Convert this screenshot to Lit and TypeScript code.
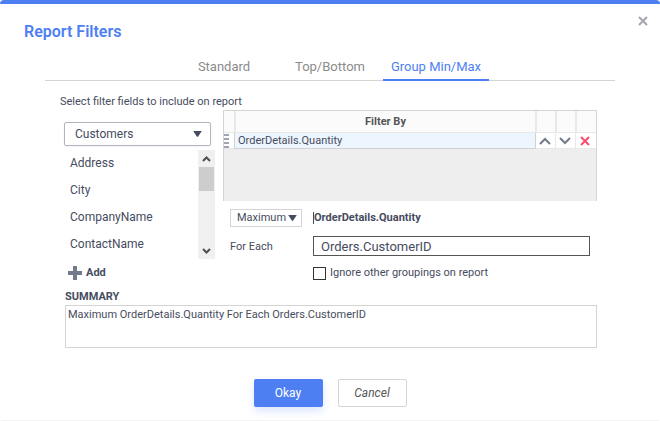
import { LitElement, html, css, svg } from "lit";
import { customElement, state } from "lit/decorators.js";
import { classMap } from "lit/directives/class-map.js";

const caret = html`<svg class="caret" width="9" height="6" viewBox="0 0 9 6" aria-hidden="true">
  <path d="M0.2 0H8.8L5.2 5.4Q4.5 6.2 3.8 5.4Z" fill="#464c60" />
</svg>`;

const strokeIcon = (w: number, h: number, d: string, color: string, width: number) => html`<svg
  width=${w} height=${h} viewBox="0 0 ${w} ${h}" fill="none" aria-hidden="true">
  ${svg`<path d=${d} stroke=${color} stroke-width=${width} />`}
</svg>`;

@customElement("app-root")
export class AppRoot extends LitElement {
  @state() private tab = "Group Min/Max";

  private tabs = ["Standard", "Top/Bottom", "Group Min/Max"];
  private fields = ["Address", "City", "CompanyName", "ContactName"];

  static styles = css`
    :host {
      display: block;
      font-family: Roboto, "Liberation Sans", sans-serif;
      font-size: 11px;
      line-height: 14px;
      color: #464c60;
    }
    * {
      box-sizing: border-box;
    }
    button, input, select, textarea {
      font: inherit;
      color: inherit;
      margin: 0;
      padding: 0;
      border: 0;
      border-radius: 0;
      background: none;
      outline: none;
    }
    svg {
      display: block;
    }
    .dialog {
      background: #fff;
      border-top: 4px solid #4d7ff3;
      border-bottom: 1px solid #f4f4f4;
      border-radius: 4px 4px 2px 2px;
      padding-bottom: 13px;
    }
    .head {
      display: flex;
      justify-content: space-between;
      align-items: flex-start;
      padding: 12px 12px 0 24px;
      height: 48px;
    }
    h1 {
      margin: 6px 0 0;
      font-size: 16px;
      line-height: 20px;
      font-weight: 600;
      color: #4d7ff3;
    }
    .tabs {
      display: flex;
      justify-content: center;
      margin: 0 45px;
      height: 29px;
      border-bottom: 1px solid #d4d4d4;
    }
    .tab {
      width: 106px;
      height: 29px;
      padding-top: 2px;
      font-size: 13px;
      color: #8b8b8b;
      border-bottom: 2px solid transparent;
    }
    .tab.active {
      color: #4d7ff3;
      border-color: #4d7ff3;
    }
    .body {
      padding: 14px 63px 0 60px;
    }
    .hint {
      margin: 0 0 1px;
    }
    .columns {
      display: grid;
      grid-template-columns: 163px minmax(0, 1fr);
    }
    .left {
      padding: 12px 8px 0 4px;
    }
    .pick {
      display: grid;
      align-items: center;
    }
    .pick select, .caret {
      grid-area: 1 / 1;
    }
    .pick select {
      appearance: none;
      width: 100%;
    }
    .caret {
      justify-self: end;
      pointer-events: none;
    }
    .table-pick {
      margin-right: 4px;
    }
    .table-pick select {
      height: 24px;
      padding: 0 10px;
      font-size: 12px;
      border: 1px solid #b1b5c0;
      border-radius: 2px;
      box-shadow: 0 1px 3px #0000000d;
    }
    .table-pick .caret {
      margin-right: 9px;
    }
    .list {
      display: flex;
      height: 109px;
      margin-top: 4px;
    }
    .list ul {
      flex: 1;
      list-style: none;
      margin: 0;
      padding: 0;
      overflow: hidden;
    }
    .list li button {
      display: block;
      width: 100%;
      height: 27px;
      padding: 0 6px 2px;
      font-size: 12px;
      text-align: left;
    }
    .bar {
      display: flex;
      flex-direction: column;
      width: 17px;
      background: #f0f0f0;
    }
    .bar button {
      display: grid;
      place-items: center;
      height: 17px;
    }
    .track {
      flex: 1;
      padding: 0 1px;
    }
    .thumb {
      height: 24px;
      background: #cdcdcd;
    }
    .add {
      display: flex;
      align-items: center;
      gap: 4px;
      height: 14px;
      margin: 7px 0 0 4px;
      font-weight: 700;
    }
    .grid {
      height: 91px;
      background: #eee;
      border: 1px solid #d4d4d4;
      border-bottom: 0;
    }
    table {
      width: 100%;
      table-layout: fixed;
      border-collapse: separate;
      border-spacing: 0;
    }
    .drag-col {
      width: 10px;
    }
    .icon-col {
      width: 20px;
    }
    .last-col {
      width: 21px;
    }
    th, td {
      padding: 0;
    }
    th {
      height: 22px;
      background: #fbfbfb;
      border-left: 2px solid #e8e8e8;
      border-bottom: 1px solid #e8e8e8;
      font-weight: 700;
      color: #555;
    }
    th:first-child {
      border-left: 0;
    }
    td {
      height: 16px;
      background: #fff;
      border-bottom: 1px solid #e8e8e8;
      border-left: 1px solid #e8e8e8;
    }
    td.name {
      padding-left: 3px;
      background: #edf5fe;
      border-color: #d0d2d6;
    }
    td.name + td {
      border-left-color: #d0d2d6;
    }
    td.drag {
      border-left: 0;
    }
    td button {
      display: grid;
      place-items: center;
      width: 18px;
      height: 15px;
    }
    .rule {
      display: grid;
      grid-template-columns: 72px minmax(0, 1fr);
      column-gap: 11px;
      align-items: center;
      padding: 8px 7px 0;
    }
    .agg select {
      height: 18px;
      padding: 0 6px;
      border: 1px solid #d4d4d4;
    }
    .agg .caret {
      margin-right: 5px;
    }
    .field {
      font-weight: 700;
      border-left: 1px solid #464c60;
      line-height: 12px;
    }
    .each {
      height: 20px;
      width: 100%;
      margin: 9px 0 10px;
      padding: 0 7px;
      border: 1px solid #555;
      font-size: 13px;
    }
    .ignore {
      grid-column: 2;
      display: flex;
      align-items: center;
      gap: 4px;
    }
    .ignore input {
      appearance: none;
      width: 13px;
      height: 13px;
      border: 1px solid #333;
    }
    .ignore input:checked {
      background: #464c60;
    }
    .summary {
      display: flex;
      flex-direction: column;
      gap: 1px;
      margin: 10px 0 0 5px;
    }
    .summary label {
      font-weight: 700;
    }
    textarea {
      display: block;
      height: 43px;
      padding: 2px;
      border: 1px solid #d4d4d4;
      resize: none;
    }
    .actions {
      display: flex;
      justify-content: center;
      gap: 15px;
      margin-top: 31px;
    }
    .action {
      width: 69px;
      height: 28px;
      border-radius: 2px;
      font-size: 12px;
    }
    .primary {
      background: #4d7ff3;
      color: #fff;
      box-shadow: 0 4px 8px #4d7ff333;
    }
    .secondary {
      border: 1px solid #d4d4d4;
      font-style: italic;
      color: #555;
    }
  `;

  render() {
    return html`
      <form class="dialog" @submit=${(e: Event) => e.preventDefault()}>
        <header class="head">
          <h1>Report Filters</h1>
          <button type="button" aria-label="Close">
            ${strokeIcon(10, 10, "M1 1L9 9M9 1L1 9", "#a4a6ae", 2)}
          </button>
        </header>
        <nav class="tabs" role="tablist">
          ${this.tabs.map(
            (t) => html`<button
              type="button"
              role="tab"
              aria-selected=${t === this.tab}
              class=${classMap({ tab: true, active: t === this.tab })}
              @click=${() => (this.tab = t)}
            >${t}</button>`
          )}
        </nav>
        <div class="body">
          <p class="hint">Select filter fields to include on report</p>
          <div class="columns">
            <section class="left">
              <div class="pick table-pick">
                <select aria-label="Table"><option>Customers</option></select>
                ${caret}
              </div>
              <div class="list">
                <ul>
                  ${this.fields.map((f) => html`<li><button type="button">${f}</button></li>`)}
                </ul>
                <div class="bar">
                  <button type="button" aria-label="Scroll up">
                    ${strokeIcon(9, 6, "M1 5L4.5 1.5L8 5", "#505050", 2)}
                  </button>
                  <div class="track"><div class="thumb"></div></div>
                  <button type="button" aria-label="Scroll down">
                    ${strokeIcon(9, 6, "M1 1L4.5 4.5L8 1", "#505050", 2)}
                  </button>
                </div>
              </div>
              <button type="button" class="add">
                ${strokeIcon(14, 14, "M7 0V14M0 7H14", "#747a8b", 4)}
                <span>Add</span>
              </button>
            </section>
            <section>
              <div class="grid">
                <table>
                  <colgroup>
                    <col class="drag-col" /><col /><col class="icon-col" /><col class="icon-col" /><col class="last-col" />
                  </colgroup>
                  <thead>
                    <tr><th></th><th>Filter By</th><th></th><th></th><th></th></tr>
                  </thead>
                  <tbody>
                    <tr>
                      <td class="drag">${strokeIcon(5, 14, "M0 1H5M0 5H5M0 9H5M0 13H5", "#a3a3b3", 2)}</td>
                      <td class="name">OrderDetails.Quantity</td>
                      <td><button type="button" aria-label="Move up">
                        ${strokeIcon(12, 8, "M1 7L6 2L11 7", "#747a8b", 2)}
                      </button></td>
                      <td><button type="button" aria-label="Move down">
                        ${strokeIcon(12, 8, "M1 1L6 6L11 1", "#747a8b", 2)}
                      </button></td>
                      <td><button type="button" aria-label="Remove">
                        ${strokeIcon(10, 10, "M1 1L9 9M9 1L1 9", "#fa4d6c", 2)}
                      </button></td>
                    </tr>
                  </tbody>
                </table>
              </div>
              <div class="rule">
                <div class="pick agg">
                  <select aria-label="Function"><option>Maximum</option></select>
                  ${caret}
                </div>
                <div class="field">OrderDetails.Quantity</div>
                <label for="each">For Each</label>
                <input class="each" id="each" type="text" value="Orders.CustomerID" />
                <label class="ignore"><input type="checkbox" />Ignore other groupings on report</label>
              </div>
            </section>
          </div>
          <div class="summary">
            <label for="summary">SUMMARY</label>
            <textarea id="summary" readonly .value=${"Maximum OrderDetails.Quantity For Each Orders.CustomerID"}></textarea>
          </div>
        </div>
        <footer class="actions">
          <button class="action primary">Okay</button>
          <button type="button" class="action secondary">Cancel</button>
        </footer>
      </form>
    `;
  }
}
